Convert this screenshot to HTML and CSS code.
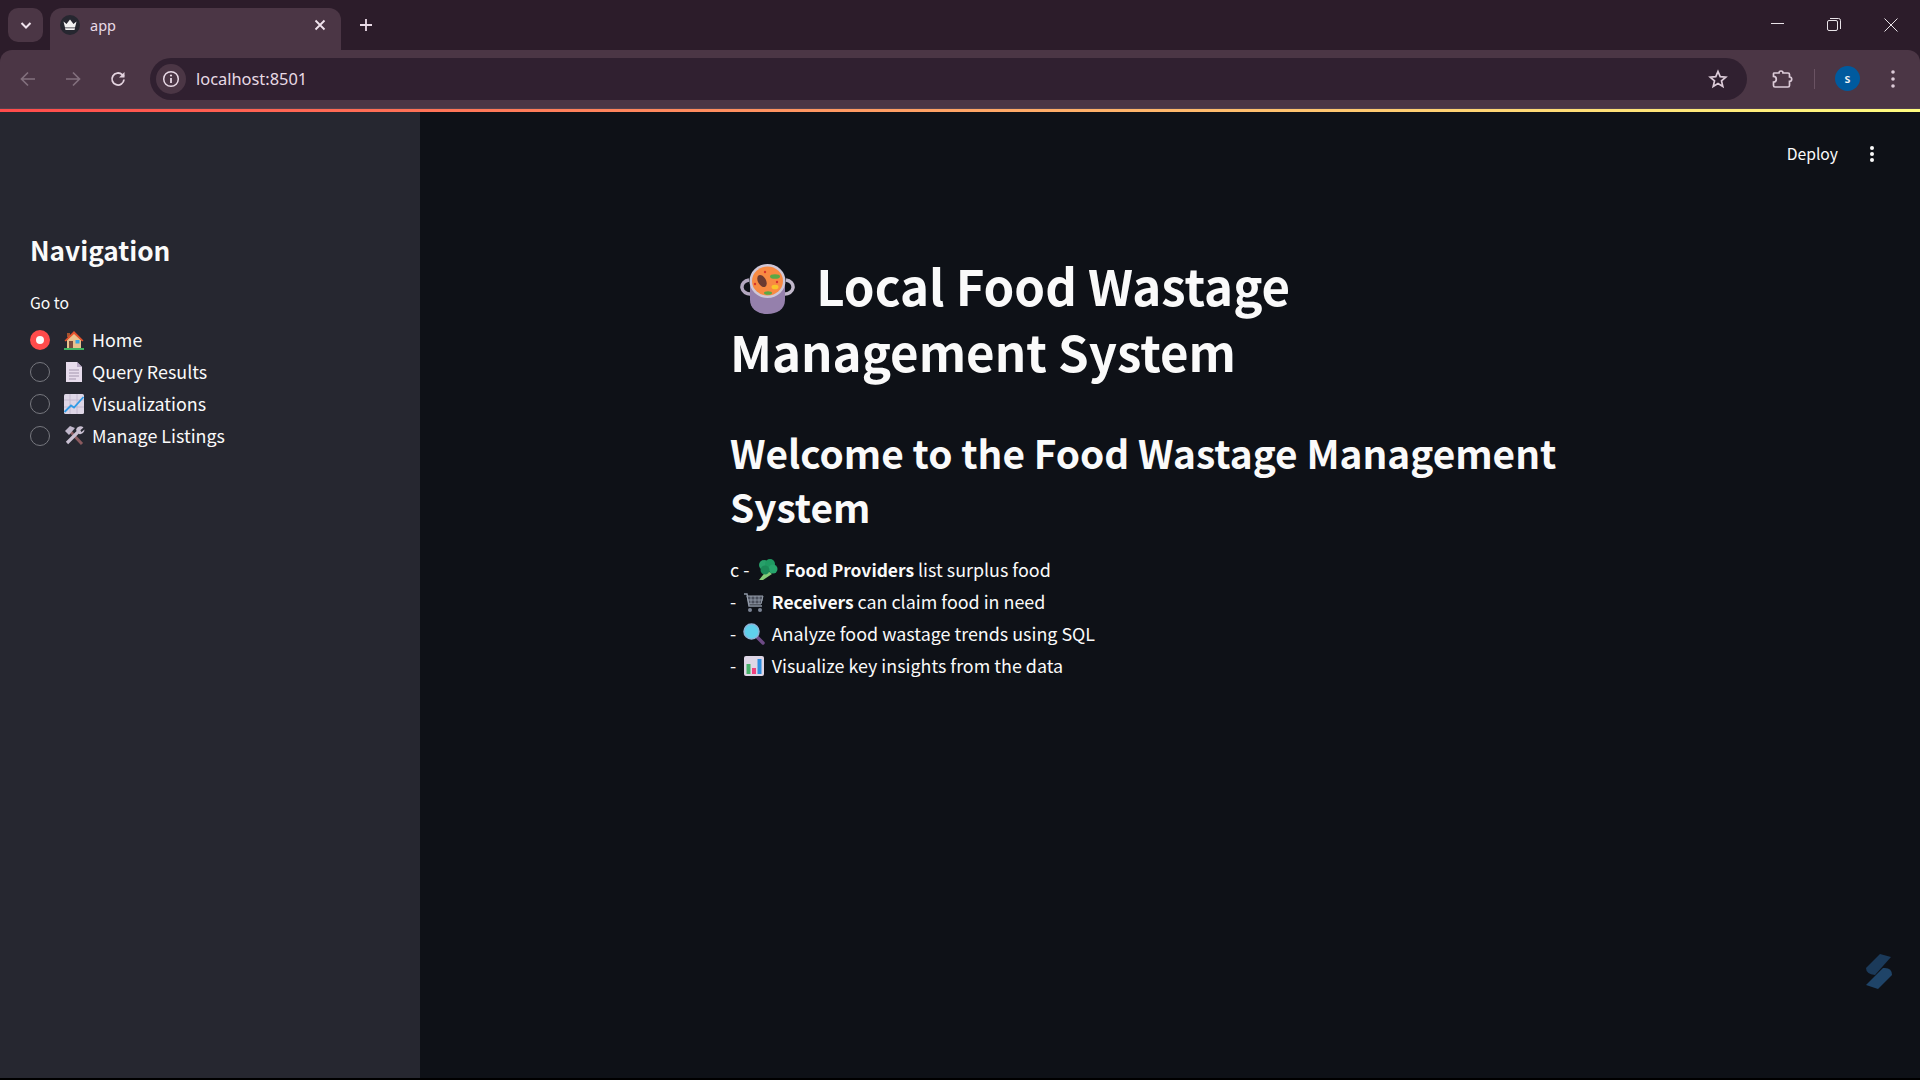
FILE: index.html
```html
<!DOCTYPE html>
<html lang="en">
<head>
<meta charset="utf-8">
<title>app</title>
<link rel="stylesheet" href="styles.css">
</head>
<body>
<header class="chrome">
  <div class="tabstrip">
    <div class="tab-search"><svg width="14" height="14" viewBox="0 0 14 14"><path d="M2.5 5 7 9.5 11.5 5" fill="none" stroke="#f1e4ee" stroke-width="2"/></svg></div>
    <div class="tab">
      <span class="favicon"><svg width="20" height="20" viewBox="0 0 20 20"><circle cx="10" cy="10" r="10" fill="#262730"/><path d="M3.5 6.5 6.5 9 10 4.5 13.5 9 16.5 6.5 15 12.5H5z" fill="#f3f3f3"/><path d="M5 13.3h10l-.5 1.7h-9z" fill="#f3f3f3"/></svg></span>
      <span class="tab-title">app</span>
      <svg class="tab-close" width="12" height="12" viewBox="0 0 12 12"><path d="M1.5 1.5 10.5 10.5M10.5 1.5 1.5 10.5" stroke="#f1e4ee" stroke-width="1.8"/></svg>
    </div>
    <svg class="new-tab" width="14" height="14" viewBox="0 0 14 14"><path d="M7 1v12M1 7h12" stroke="#e9dae6" stroke-width="1.8"/></svg>
    <div class="window-controls">
      <svg class="win-min" width="14" height="14" viewBox="0 0 14 14"><path d="M0 5.5h13" stroke="#e9e3e8" stroke-width="1"/></svg>
      <svg width="14" height="14" viewBox="0 0 14 14"><rect x=".5" y="2.5" width="10" height="10" rx="1.5" fill="none" stroke="#e9e3e8"/><path d="M3 .5h8.500a2 2 0 0 1 2 2V11" fill="none" stroke="#e9e3e8"/></svg>
      <svg width="14" height="14" viewBox="0 0 14 14"><path d="M.5.5l13 13M13.500.5l-13 13" stroke="#e9e3e8"/></svg>
    </div>
  </div>
  <div class="toolbar">
    <svg class="nav-icon" width="20" height="20" viewBox="0 0 20 20"><path d="M17 10H4M10 3.500 3.500 10l6.500 6.500" fill="none" stroke="#82707d" stroke-width="1.700"/></svg>
    <svg class="nav-icon" width="20" height="20" viewBox="0 0 20 20"><path d="M3 10h13M10 3.500l6.500 6.500-6.500 6.500" fill="none" stroke="#82707d" stroke-width="1.700"/></svg>
    <svg class="nav-icon" width="20" height="20" viewBox="0 0 20 20"><path d="M16 10.500a6 6 0 1 1-1.800-4.800L16 7.500" fill="none" stroke="#e3d3df" stroke-width="1.800"/><path d="M16.500 3v5.500H11z" fill="#e3d3df"/></svg>
    <div class="omnibox">
      <span class="site-info"><svg width="18" height="18" viewBox="0 0 18 18"><circle cx="9" cy="9" r="7.300" fill="none" stroke="#e8d9e5" stroke-width="1.500"/><path d="M9 8v5" stroke="#e8d9e5" stroke-width="1.800"/><circle cx="9" cy="5.500" r="1.100" fill="#e8d9e5"/></svg></span>
      <span class="url">localhost:8501</span>
      <svg class="star" width="20" height="20" viewBox="0 0 20 20"><path d="M10 2.500 12.200 7.700l5.600.5-4.300 3.700 1.300 5.500L10 14.500l-4.800 2.900 1.300-5.500-4.300-3.700 5.600-.5z" fill="none" stroke="#dccbd8" stroke-width="1.700"/></svg>
    </div>
    <svg class="puzzle" width="22" height="22" viewBox="0 0 22 22"><path d="M3 5h5a2 2 0 0 1 4 0h5a1.500 1.500 0 0 1 1.500 1.500V9a2.200 2.200 0 0 1 0 4.400v4.100A1.500 1.500 0 0 1 17 19H4a1.500 1.500 0 0 1-1.500-1.500V14a2.800 2.800 0 0 0 0-5.600V6A1 1 0 0 1 3 5z" fill="none" stroke="#dccbd8" stroke-width="1.700"/></svg>
    <span class="divider"></span>
    <span class="avatar">s</span>
    <svg class="menu-dots" width="6" height="20" viewBox="0 0 6 20"><circle cx="3" cy="3" r="1.800" fill="#dccbd8"/><circle cx="3" cy="10" r="1.800" fill="#dccbd8"/><circle cx="3" cy="17" r="1.800" fill="#dccbd8"/></svg>
  </div>
</header>
<div class="decoration"></div>
<div class="app">
  <aside class="sidebar">
    <h2 class="side-title">Navigation</h2>
    <div class="side-label">Go to</div>
    <div class="radio-group">
      <div class="radio-row"><span class="radio radio-on"></span>
        <svg class="emoji-s" viewBox="0 0 22 22"><path d="M4 4h3v4H4z" fill="#a5532f"/><path d="M4 11 11 3.500 18 11v8H4z" fill="#e8c28d"/><path d="M1.500 11.500 11 2l9.500 9.500-1.300 1L11 5 2.800 12.500z" fill="#e5532d"/><rect x="6" y="12" width="4" height="7" fill="#7a4a3c"/><rect x="12.500" y="11" width="4" height="3.500" fill="#3aa7e6"/><rect x="1" y="19" width="20" height="2" fill="#3fb560"/></svg>
        <span>Home</span></div>
      <div class="radio-row"><span class="radio"></span>
        <svg class="emoji-s" viewBox="0 0 22 22"><path d="M3 1h11l5 5v15H3z" fill="#e7dcec"/><path d="M14 1l5 5h-5z" fill="#b9a9c6"/><path d="M6 9h10M6 12h10M6 15h10M6 18h7" stroke="#a396ae" stroke-width="1"/></svg>
        <span>Query Results</span></div>
      <div class="radio-row"><span class="radio"></span>
        <svg class="emoji-s" viewBox="0 0 22 22"><rect x="1" y="1" width="20" height="20" rx="1.500" fill="#ded6e6"/><path d="M7 1v20M14 1v20M1 7h20M1 14h20" stroke="#bfb4cb" stroke-width=".8"/><path d="M1.500 19 8 12.500l3 2L20.500 4" fill="none" stroke="#2f9be6" stroke-width="1.800"/></svg>
        <span>Visualizations</span></div>
      <div class="radio-row"><span class="radio"></span>
        <svg class="emoji-s" viewBox="0 0 22 22"><path d="M6 5 19 19" stroke="#8a5a5f" stroke-width="3"/><path d="M2 6 7 1l5 2-6 7z" fill="#c0b7cb"/><path d="M17 5 4 18" stroke="#c9c0d2" stroke-width="3.200"/><path d="M13 5a4.500 4.500 0 0 1 7.500-2.500L17 5.500l1.500 1.500 3-2.500A4.500 4.500 0 0 1 16 9z" fill="#c9c0d2"/></svg>
        <span>Manage Listings</span></div>
    </div>
  </aside>
  <main class="main">
    <div class="app-header">
      <span class="deploy">Deploy</span>
      <svg class="app-menu" width="6" height="18" viewBox="0 0 6 18"><circle cx="3" cy="3" r="2" fill="#fafafa"/><circle cx="3" cy="9" r="2" fill="#fafafa"/><circle cx="3" cy="15" r="2" fill="#fafafa"/></svg>
    </div>
    <article class="content">
      <h1 class="title"><svg class="emoji-pot" viewBox="0 0 55 50"><path d="M9 16a8 7 0 1 0 2 14" fill="none" stroke="#b3a7bf" stroke-width="3.500"/><path d="M46 16a8 7 0 1 1-2 14" fill="none" stroke="#c2b9cc" stroke-width="3.500"/><path d="M10 16h35v20c0 9-8 14-17.500 14S10 45 10 36z" fill="#9580ac"/><ellipse cx="27.500" cy="17" rx="18" ry="17" fill="#cfc7d8"/><ellipse cx="27.500" cy="17" rx="15.500" ry="14.500" fill="#f88a42"/><ellipse cx="22" cy="17" rx="4" ry="6.500" transform="rotate(-30 22 17)" fill="#6c3a30"/><ellipse cx="35" cy="12.500" rx="5" ry="2.300" fill="#5aa845"/><ellipse cx="35" cy="23" rx="3.500" ry="2.300" fill="#f9c52b"/><ellipse cx="28" cy="29" rx="4" ry="1.800" fill="#5aa845"/><circle cx="25" cy="8" r="1.200" fill="#d8352f"/><circle cx="37" cy="18" r="1.200" fill="#d8352f"/><circle cx="15" cy="20" r="1.200" fill="#d8352f"/></svg> Local Food Wastage Management System</h1>
      <h2 class="subtitle">Welcome to the Food Wastage Management System</h2>
      <div class="features">
        <div class="feature">c - <svg class="emoji-t" viewBox="0 0 22 22"><path d="M3 21 11 11l5 4-9 6z" fill="#86cc78"/><circle cx="8" cy="6" r="5" fill="#27a06a"/><circle cx="14" cy="5" r="5" fill="#1f9a62"/><circle cx="17" cy="10" r="4.500" fill="#27a56c"/><circle cx="9" cy="11" r="4.500" fill="#1b8a58"/></svg> <strong>Food Providers</strong> list surplus food</div>
        <div class="feature">- <svg class="emoji-t" viewBox="0 0 22 22"><path d="M1 3h3l2 12h13" fill="none" stroke="#8d96a5" stroke-width="1.500"/><path d="M4 5h16l-2 8H6z" fill="#4a4f5c" stroke="#9aa3b0" stroke-width="1"/><path d="M8 5v8M12 5v8M16 5v8M5 9h15" stroke="#9aa3b0" stroke-width=".8"/><circle cx="7" cy="19" r="2" fill="#7b8494"/><circle cx="17" cy="19" r="2" fill="#7b8494"/></svg> <strong>Receivers</strong> can claim food in need</div>
        <div class="feature">- <svg class="emoji-t" viewBox="0 0 22 22"><path d="M13 13 20 20" stroke="#6d4a86" stroke-width="3.500" stroke-linecap="round"/><circle cx="8.500" cy="8.500" r="7.500" fill="#5fd0ec" stroke="#8cb4d8" stroke-width="1.500"/></svg> Analyze food wastage trends using SQL</div>
        <div class="feature">- <svg class="emoji-t" viewBox="0 0 22 22"><rect x="1" y="1" width="20" height="20" rx="2" fill="#ded6e6"/><rect x="3.500" y="9" width="4" height="10" fill="#46b06a"/><rect x="9" y="13" width="4" height="6" fill="#f0417d"/><rect x="14.500" y="4" width="4" height="15" fill="#2f8fe0"/></svg> Visualize key insights from the data</div>
      </div>
    </article>
    <svg class="watermark" width="26" height="36" viewBox="0 0 26 36"><path d="M14 0 25 3 9 21Q0 20 0 14z" fill="#1b3a5a"/><path d="M0 31 17 14Q26 13 26 21L12 35z" fill="#1f4468"/></svg>
  </main>
</div>
</body>
</html>
```
FILE: styles.css
```css
* { box-sizing: border-box; }
html, body { margin: 0; height: 100%; }
body {
  display: flex;
  flex-direction: column;
  height: 1080px;
  padding-bottom: 2px;
  overflow: hidden;
  background: #000;
  font-family: "Noto Sans CJK SC", "Noto Sans", sans-serif;
  color: #fafafa;
}

/* browser chrome */
.chrome { flex: none; background: #2c1c2a; font-family: "Noto Sans", sans-serif; }
.tabstrip { position: relative; display: flex; align-items: flex-start; height: 50px; padding: 8px 0 0 8px; }
.tab-search { width: 35px; height: 34px; display: flex; align-items: center; justify-content: center; border-radius: 10px; background: #4b3645; }
.tab { display: flex; align-items: center; width: 291px; height: 42px; margin-left: 7px; padding: 0 15px 8px 10px; background: #4b3645; border-radius: 12px 12px 0 0; }
.favicon { display: flex; width: 20px; height: 20px; }
.tab-title { flex: 1; margin-left: 10px; font-size: 14.500px; color: #e8dae5; }
.new-tab { margin: 10px 0 0 18px; }
.window-controls { display: flex; gap: 43px; margin: 10px 22px 0 auto; }
.win-min { margin-right: -1px; }
.toolbar { display: flex; align-items: center; height: 58px; padding: 0 24px 1px 18px; background: #4b3645; border-radius: 12px 12px 0 0; }
.nav-icon { flex: none; margin-right: 25px; }
.nav-icon:nth-child(3) { margin-right: 22px; }
.omnibox { flex: 1; display: flex; align-items: center; height: 42px; padding: 0 19px 0 6px; background: #302030; border-radius: 21px; }
.site-info { display: flex; align-items: center; justify-content: center; width: 30px; height: 30px; border-radius: 50%; background: #4b3645; }
.url { flex: 1; margin-left: 10px; font-size: 16.400px; color: #e8dae5; }
.puzzle { flex: none; margin-left: 24px; }
.divider { flex: none; width: 1.500px; height: 20px; margin-left: 21px; background: #6a5363; }
.avatar { flex: none; display: flex; align-items: center; justify-content: center; width: 25px; height: 25px; margin-left: 20px; border-radius: 50%; background: #005a9e; color: #f2f2f2; font-size: 12px; font-weight: 600; }
.menu-dots { flex: none; margin-left: 30px; }
.decoration { flex: none; height: 4px; border-top: 1px solid #54424e; background: linear-gradient(90deg, #ff4b4b, #fffd80); }

/* app */
.app { flex: 1; display: flex; min-height: 0; }
.sidebar { flex: none; width: 420px; padding: 113px 30px 0; background: #262730; }
.side-title { margin: 0; font-size: 26.200px; line-height: 50px; font-weight: 700; }
.side-label { margin-top: 14px; font-size: 15.700px; line-height: 28px; }
.radio-group { margin-top: 7px; }
.radio-row { display: flex; align-items: center; height: 32px; font-size: 17.900px; }
.radio-row > span:last-child { position: relative; top: -1px; }
.radio { flex: none; width: 20px; height: 20px; margin-right: 13px; border-radius: 50%; border: 1px solid #77787f; background: #262730; }
.radio-on { border: 6px solid #ff4b4b; background: #fafafa; }
.emoji-s { flex: none; width: 22px; height: 22px; margin-right: 7px; }

.main { position: relative; flex: 1; min-width: 0; background: #0e1117; }
.app-header { display: flex; align-items: center; justify-content: flex-end; height: 84px; padding: 0 45px 0 0; }
.deploy { padding-bottom: 2px; font-size: 15.700px; }
.app-menu { margin-left: 31px; }
.content { width: 880px; margin: 0 auto; padding-top: 56px; }
.title { margin: 0; font-size: 49.200px; line-height: 66px; font-weight: 700; }
.emoji-pot { width: 55px; height: 50px; margin: 0 10px 0 10px; vertical-align: -8px; }
.subtitle { margin: 41px 0 0; font-size: 38.800px; line-height: 54px; font-weight: 700; }
.features { margin-top: 20px; font-size: 17.900px; line-height: 32px; }
.feature { height: 32px; }
.features strong { font-size: 17.400px; font-weight: 700; }
.emoji-t { width: 22px; height: 22px; margin: 0 2.500px 0 3px; vertical-align: -4px; }
.watermark { position: absolute; right: 28px; bottom: 88px; }
```
